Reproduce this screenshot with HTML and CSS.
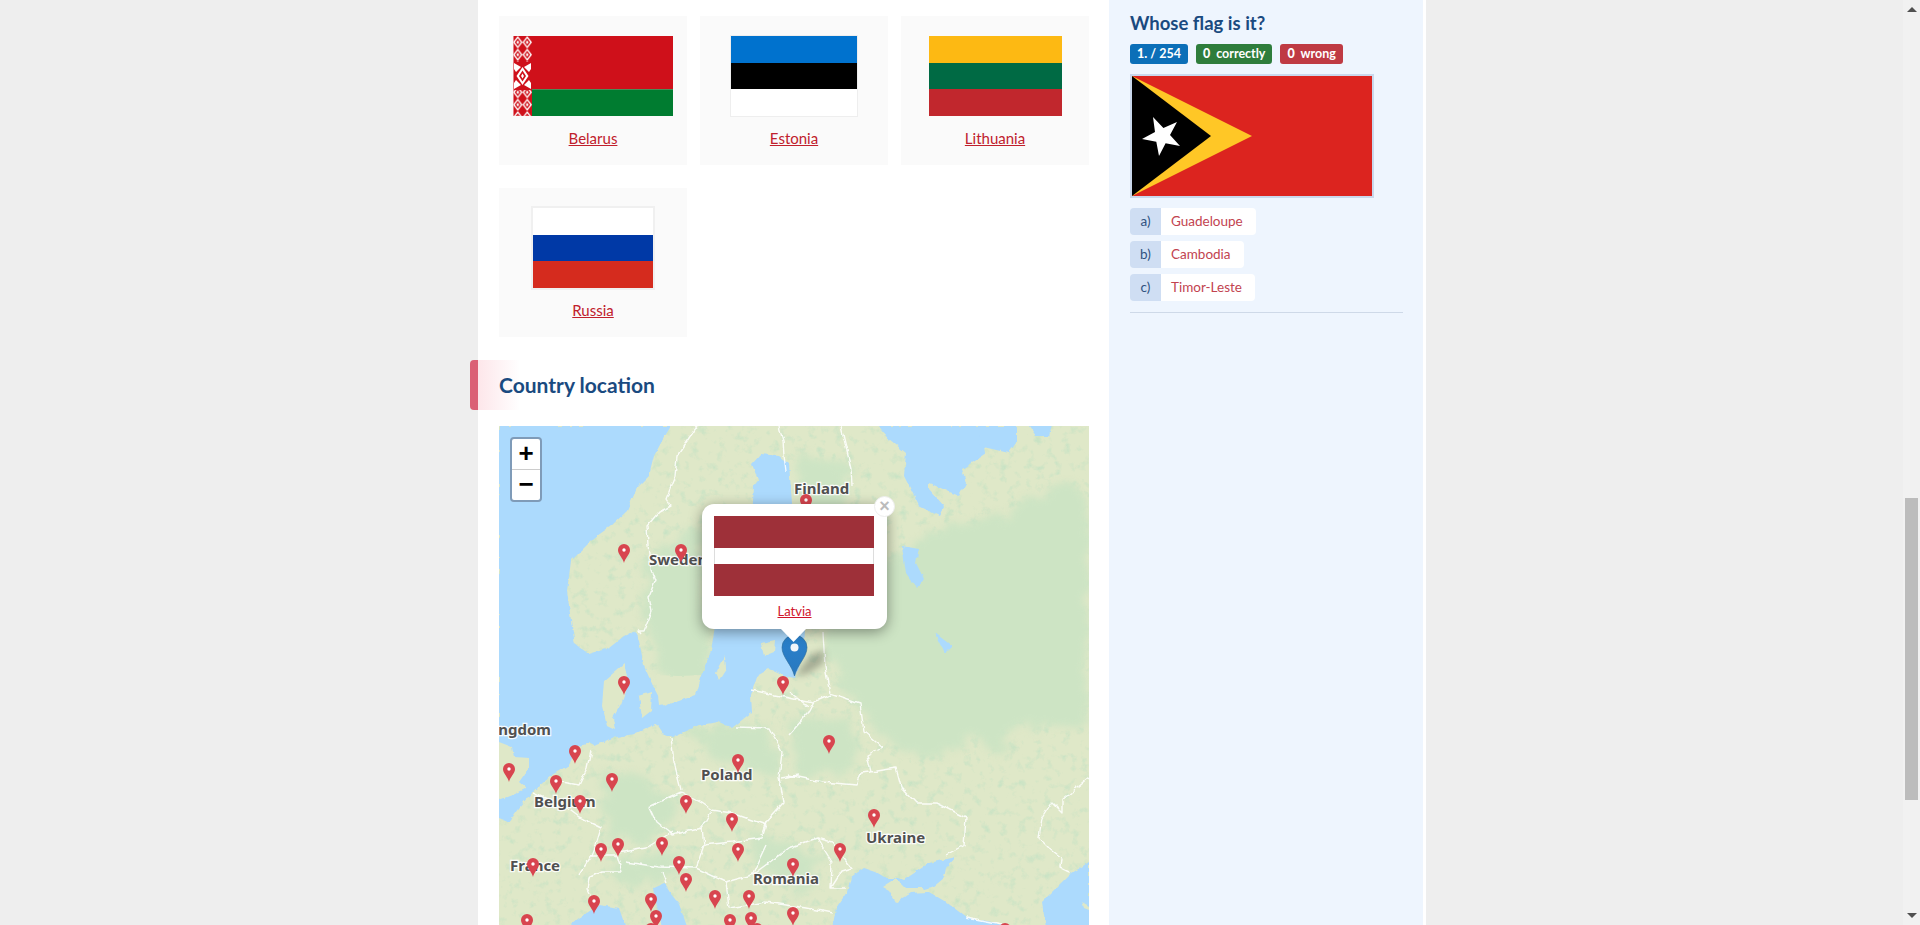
FILE: index.html
```html
<!DOCTYPE html>
<html lang="en">
<head>
<meta charset="utf-8">
<title>Country location</title>
<link rel="stylesheet" href="styles.css">
</head>
<body>
<div class="page">
  <div class="shell">
    <main class="content">
      <div class="cards">
        <article class="card">
          <svg class="flag flag-by" viewBox="0 0 160 80" width="160" height="80" role="img" aria-label="Flag of Belarus">
            <defs>
              <pattern id="byp" width="9.500" height="12.500" patternUnits="userSpaceOnUse">
                <rect width="9.500" height="12.500" fill="#cf101a"/>
                <path d="M4.750 0 9.500 6.250 4.750 12.500 0 6.250Z" fill="#fff"/>
                <path d="M4.750 2.200 7.800 6.250 4.750 10.300 1.700 6.250Z" fill="#cf101a"/>
                <path d="M4.750 4.400 6.100 6.250 4.750 8.100 3.400 6.250Z" fill="#fff"/>
              </pattern>
            </defs>
            <rect width="160" height="53.300" fill="#cf101a"/>
            <rect y="53.300" width="160" height="26.700" fill="#007c30"/>
            <rect width="19" height="80" fill="url(#byp)"/>
            <rect y="26" width="19" height="28" fill="#cf101a"/>
            <path d="M1 27 8 31 3 36 1 33ZM18 27 11 31 16 36 18 33ZM1 53 8 49 3 44 1 47ZM18 53 11 49 16 44 18 47Z" fill="#fff"/>
            <path d="M9.500 31 15.500 40 9.500 49 3.500 40Z" fill="#fff"/>
            <path d="M9.500 34.500 13 40 9.500 45.500 6 40Z" fill="#cf101a"/>
            <path d="M9.500 37.500 11 40 9.500 42.500 8 40Z" fill="#fff"/>
            <rect width="0.600" height="80" fill="#f3c9cb"/>
          </svg>
          <a class="card-link" href="#">Belarus</a>
        </article>
        <article class="card">
          <div class="flag flag-ee"><span class="stripe ee-a"></span><span class="stripe ee-b"></span><span class="stripe ee-c"></span></div>
          <a class="card-link" href="#">Estonia</a>
        </article>
        <article class="card">
          <div class="flag flag-lt"><span class="stripe lt-a"></span><span class="stripe lt-b"></span><span class="stripe lt-c"></span></div>
          <a class="card-link" href="#">Lithuania</a>
        </article>
        <article class="card">
          <div class="flag flag-ru"><span class="stripe ru-a"></span><span class="stripe ru-b"></span><span class="stripe ru-c"></span></div>
          <a class="card-link" href="#">Russia</a>
        </article>
      </div>

      <h2 class="section-title">Country location</h2>

      <div class="map">
        <svg class="map-art" viewBox="0 0 590 520" width="590" height="520" aria-hidden="true">
          <defs>
            <filter id="rough" x="-10%" y="-10%" width="120%" height="120%" color-interpolation-filters="sRGB">
              <feTurbulence type="fractalNoise" baseFrequency="0.06" numOctaves="3" seed="4"/>
              <feDisplacementMap in="SourceGraphic" scale="26" xChannelSelector="R" yChannelSelector="G"/>
              <feGaussianBlur stdDeviation="3.500"/>
            </filter>
            <filter id="coast" x="-2%" y="-2%" width="104%" height="104%" color-interpolation-filters="sRGB">
              <feTurbulence type="fractalNoise" baseFrequency="0.14" numOctaves="2" seed="9"/>
              <feDisplacementMap in="SourceGraphic" scale="4" xChannelSelector="R" yChannelSelector="G"/>
              <feGaussianBlur stdDeviation="0.450"/>
            </filter>
            <filter id="wiggle" x="-2%" y="-2%" width="104%" height="104%" color-interpolation-filters="sRGB">
              <feTurbulence type="fractalNoise" baseFrequency="0.11" numOctaves="2" seed="21"/>
              <feDisplacementMap in="SourceGraphic" scale="5" xChannelSelector="R" yChannelSelector="G"/>
              <feGaussianBlur stdDeviation="0.350"/>
            </filter>
            <filter id="speck" x="0" y="0" width="100%" height="100%" color-interpolation-filters="sRGB">
              <feTurbulence type="fractalNoise" baseFrequency="0.11" numOctaves="4" seed="12"/>
              <feColorMatrix values="0 0 0 0 0.79  0 0 0 0 0.89  0 0 0 0 0.77  3.200 0 0 0 -1.750"/>
              <feGaussianBlur stdDeviation="0.600"/>
            </filter>
            <filter id="soft" x="-50%" y="-50%" width="200%" height="200%"><feGaussianBlur stdDeviation="3.500"/></filter>
            <linearGradient id="blue" x1="0" y1="0" x2="0" y2="1">
              <stop offset="0" stop-color="#2a81cb"/>
              <stop offset="1" stop-color="#2878c0"/>
            </linearGradient>
            <symbol id="pin" viewBox="0 0 12 19" width="12" height="19" overflow="visible">
              <path d="M6 19C5 14 0 10.500 0 6A6 6 0 0 1 12 6C12 10.500 7 14 6 19Z" fill="#d8454f"/>
              <circle cx="6" cy="6" r="1.700" fill="#fff"/>
            </symbol>
          </defs>

          <rect class="land" width="590" height="520"/>
          <rect width="590" height="520" filter="url(#speck)"/>

          <g class="forest" filter="url(#rough)">
            <path d="M395 130 440 100 500 90 560 60 590 70V300H520L500 330 480 310 430 330 390 320 370 290 340 260 325 210 340 170Z"/>
            <path d="M150 130 200 100 215 250 175 270 160 230 145 190Z"/>
            <path d="M300 30 350 40 345 110 300 105Z"/>
            <path d="M100 350 140 345 175 380 150 420 110 410Z"/>
            <path d="M290 295 350 285 360 345 300 350Z"/>
            <path d="M100 440 170 425 195 445 125 458Z"/>
            <path d="M190 300 270 300 285 350 220 340Z"/>
            <path d="M250 400 290 420 330 430 300 470 260 440Z"/>
          </g>

          <g class="water" filter="url(#coast)">
            <path d="M0 0H172L163 15 155 30 150 50 138 62 128 85 112 100 95 112 72 135 68 165 72 195 76 218 90 228 110 222 125 210 135 205 140 215 145 240 155 262 165 281 185 270 203 250 212 225 216 200 235 150 253 90 255 60 270 40 290 38 293 77 282 120 285 170 306 203 305 225 300 242 296 252 285 250 270 243 258 250 252 269 253 286 233 302 220 296 200 299 173 311 163 307 157 298 135 308 113 312 95 320 90 317 78 321 70 339 53 349 33 366 20 382 10 396 0 392Z"/>
            <path d="M47 520 80 492 100 479 120 482 133 520Z"/>
            <path d="M154 462 165 457 172 468 180 478 195 520H165L158 480Z"/>
            <path d="M330 520 337 482 348 466 352 451 365 442 377 446 387 452 400 452 405 454 430 437 457 431 447 442 445 452 433 462 417 466 430 466 447 476 467 491 503 498 510 520Z"/>
            <path d="M590 436 570 449 543 476 550 520H590Z"/>
            <path d="M380 0 390 13 407 27 405 50 420 80 440 90 445 80 430 63 430 57 460 70 467 57 463 43 487 27 483 0Z"/>
            <path d="M481 0H517V17L510 27 493 23 480 20Z"/>
            <path d="M530 0H553L550 10 537 10Z"/>
            <path d="M403 120 420 123 417 137 425 153 418 163 407 147Z"/>
            <path d="M436 207 453 220 446 227Z"/>
            <path d="M253 38 262 28 280 30 290 38 280 60 262 62Z"/>
          </g>
          <g class="land-patch" filter="url(#coast)">
            <path d="M0 316 13 321 15 331 30 332 30 342 20 356 27 362 13 369 0 374Z"/>
            <path d="M125 238 128 250 128 262 122 278 114 292 116 304 108 300 103 280 105 255Z"/>
            <path d="M140 270 153 266 152 285 143 292Z"/>
            <path d="M157 249 180 250 203 249 197 269 177 276 160 279Z"/>
            <path d="M217 248 226 230 227 243 220 254Z"/>
            <path d="M262 218 276 215 275 226 265 230Z"/>
            <path d="M383 461 397 452 407 462 423 462 427 466 412 467 397 477 390 465Z"/>
            <path d="M583 476 590 480V484L585 482Z"/>
          </g>

          <g class="borders" filter="url(#wiggle)">
            <path d="M198 0 188 15 178 30 176 50 167 72 172 80 160 86 148 100 149 120 152 145 156 155 150 170 153 185 145 205 140 205 142 208"/>
            <path d="M280 0 284 15 285 30 287 45"/>
            <path d="M342 0 345 13 352 42 353 60"/>
            <path d="M324 207 326 241 331 267"/>
            <path d="M252 264 314 277"/>
            <path d="M331 267 361 277 365 306 383 321 368 329 372 346 397 342 402 361 417 377 437 377 467 392 465 419 447 429"/>
            <path d="M290 349 323 356 358 359 362 347 372 346"/>
            <path d="M290 309 310 286 315 276 332 269M290 266 310 281"/>
            <path d="M237 301 270 302 283 326 280 352 285 376 267 396 262 409M282 352 300 349"/>
            <path d="M172 311 175 336 182 364"/>
            <path d="M182 366 150 381 157 396 173 409 203 402 213 384 203 377 182 366"/>
            <path d="M213 384 233 387 267 399 263 412 233 416 205 419 203 402"/>
            <path d="M205 419 197 442 227 456 253 449 267 419"/>
            <path d="M119 427 147 422 173 406M127 436 160 441 197 442"/>
            <path d="M80 449 93 429 118 429 123 446 103 446 90 452 88 462 93 472"/>
            <path d="M68 382 80 391 102 402 97 419 93 429"/>
            <path d="M63 356 80 359 88 342 92 324M33 366 68 382"/>
            <path d="M163 446 167 456M227 456 230 482 267 476 287 479 307 482 333 487"/>
            <path d="M253 449 290 422 318 412 333 436 332 462 347 462M318 412 333 416 353 442 343 445 332 462"/>
            <path d="M590 352 563 374 563 386 553 376 543 392 540 412 550 422 563 432 562 442 570 446"/>
            <path d="M467 491 503 498"/>
          </g>

          <g class="labels">
            <text x="295" y="68">Finland</text>
            <text x="150" y="139">Sweden</text>
            <text x="52" y="309" text-anchor="end">United Kingdom</text>
            <text x="202" y="354">Poland</text>
            <text x="35" y="381">Belgium</text>
            <text x="11" y="445">France</text>
            <text x="254" y="458">Romania</text>
            <text x="367" y="417">Ukraine</text>
          </g>

          <g class="pins">
            <use href="#pin" x="119" y="118"/><use href="#pin" x="176" y="118"/><use href="#pin" x="301" y="68"/>
            <use href="#pin" x="119" y="250"/><use href="#pin" x="278" y="250"/><use href="#pin" x="70" y="319"/>
            <use href="#pin" x="4" y="337"/><use href="#pin" x="233" y="328"/><use href="#pin" x="51" y="349"/>
            <use href="#pin" x="107" y="347"/><use href="#pin" x="75" y="369"/><use href="#pin" x="181" y="369"/>
            <use href="#pin" x="227" y="387"/><use href="#pin" x="96" y="417"/><use href="#pin" x="113" y="412"/>
            <use href="#pin" x="157" y="411"/><use href="#pin" x="233" y="417"/><use href="#pin" x="28" y="432"/>
            <use href="#pin" x="174" y="430"/><use href="#pin" x="181" y="447"/><use href="#pin" x="288" y="432"/>
            <use href="#pin" x="89" y="469"/><use href="#pin" x="146" y="467"/><use href="#pin" x="210" y="464"/>
            <use href="#pin" x="244" y="464"/><use href="#pin" x="146" y="497"/><use href="#pin" x="151" y="484"/>
            <use href="#pin" x="22" y="488"/><use href="#pin" x="225" y="488"/><use href="#pin" x="246" y="486"/>
            <use href="#pin" x="288" y="481"/><use href="#pin" x="252" y="497"/><use href="#pin" x="324" y="309"/>
            <use href="#pin" x="369" y="383"/><use href="#pin" x="335" y="417"/><use href="#pin" x="500" y="497"/>
          </g>

          <path class="pin-shadow" d="M296 250 312 228 326 224 324 238 308 248Z" filter="url(#soft)"/>
          <path class="pin-blue" d="M295.500 250C293 239 283 231 283 221.500A12.500 12.500 0 0 1 308 221.500C308 231 298 239 295.500 250Z"/>
          <circle class="pin-blue-dot" cx="295.500" cy="221.500" r="4"/>
        </svg>

        <div class="zoom">
          <a class="zoom-btn zoom-in" href="#">+</a>
          <a class="zoom-btn" href="#">&#8722;</a>
        </div>

        <div class="popup">
          <a class="popup-close" href="#">&#215;</a>
          <div class="popup-flag"><span class="lv-a"></span><span class="lv-b"></span><span class="lv-a"></span></div>
          <a class="popup-link" href="#">Latvia</a>
          <span class="popup-tip"></span>
        </div>
      </div>
    </main>

    <aside class="quiz">
      <h3 class="quiz-title">Whose flag is it?</h3>
      <div class="badges">
        <span class="badge badge-blue"><b>1.</b> / 254</span>
        <span class="badge badge-green"><b>0</b> correctly</span>
        <span class="badge badge-red"><b>0</b> wrong</span>
      </div>
      <svg class="quiz-flag" viewBox="0 0 240 120" width="240" height="120" role="img" aria-label="Flag of Timor-Leste">
        <rect width="240" height="120" fill="#dc241f"/>
        <path d="M0 0 120 60 0 120Z" fill="#ffc726"/>
        <path d="M0 0 79 60 0 120Z" fill="#000"/>
        <path d="M21 41 31.400 52.100 45 46 38 59 48 70 33.600 67.200 27 80 24.300 65.700 10 63 23 56.100Z" fill="#fff"/>
      </svg>
      <ul class="answers">
        <li class="answer"><span class="answer-key">a)</span><a class="answer-text" href="#">Guadeloupe</a></li>
        <li class="answer"><span class="answer-key">b)</span><a class="answer-text" href="#">Cambodia</a></li>
        <li class="answer"><span class="answer-key">c)</span><a class="answer-text" href="#">Timor-Leste</a></li>
      </ul>
      <hr class="rule">
    </aside>
  </div>

  <div class="scrollbar" aria-hidden="true">
    <span class="arrow arrow-up"></span>
    <span class="thumb"></span>
    <span class="arrow arrow-down"></span>
  </div>
</div>
</body>
</html>
```

FILE: styles.css
```css
* { box-sizing: border-box; }

html, body {
  margin: 0;
  height: 925px;
  overflow: hidden;
}

body {
  background: #eeeeee;
  font-family: "Lato", "Noto Sans", sans-serif;
  color: #333;
}

.page {
  display: flex;
  height: 925px;
}

.shell {
  display: flex;
  width: 948px;
  margin-left: 478px;
  margin-right: 477px;
  background: #fff;
  flex: none;
}

.content {
  width: 590px;
  margin-left: 21px;
  padding-top: 16px;
  flex: none;
}

.cards {
  display: grid;
  grid-template-columns: repeat(3, 188px);
  column-gap: 13px;
  row-gap: 23px;
}

.card {
  height: 149px;
  background: #fafafa;
  padding-top: 20px;
  display: flex;
  flex-direction: column;
  align-items: center;
}

.flag {
  display: flex;
  flex-direction: column;
  height: 80px;
  flex: none;
}

.flag-ee { width: 126px; box-shadow: 0 0 0 1px #eee; }
.flag-lt { width: 133px; }
.flag-ru { width: 120px; box-shadow: 0 0 0 2px #f0f0f0; }

.stripe { flex: 1; }
.ee-a { background: #0072ce; }
.ee-b { background: #000; }
.ee-c { background: #fff; }
.lt-a { background: #fdb913; }
.lt-b { background: #006a44; }
.lt-c { background: #c1272d; }
.ru-a { background: #fff; }
.ru-b { background: #0039a6; }
.ru-c { background: #d52b1e; }

.card-link {
  margin-top: 13px;
  font-size: 15px;
  line-height: 18px;
  color: #c0202c;
  text-decoration: underline;
}

.section-title {
  margin: 23px 0 16px -29px;
  height: 50px;
  padding-left: 21px;
  border-left: 8px solid #db6075;
  border-radius: 4px 0 0 4px;
  background: linear-gradient(to right, #fde6ea, #fff 42px);
  color: #1a4a80;
  font-size: 21px;
  font-weight: 700;
  line-height: 50px;
}

.map {
  position: relative;
  width: 590px;
  height: 520px;
  overflow: hidden;
}

.map-art { display: block; }

.land { fill: #dfe8c8; }
.forest { fill: #cde4c4; }
.water { fill: #acdafd; }
.land-patch { fill: #dfe8c8; }

.borders {
  fill: none;
  stroke: #fff;
  stroke-width: 1.4;
  stroke-opacity: .85;
  stroke-linejoin: round;
}

.labels {
  font-family: "Noto Sans", sans-serif;
  font-size: 15px;
  font-weight: 700;
  fill: #505050;
  stroke: #fff;
  stroke-width: 2.500px;
  stroke-opacity: .9;
  paint-order: stroke;
}

.pin-shadow { fill: rgba(0, 0, 0, .26); }
.pin-blue { fill: url(#blue); stroke: #2e6c97; stroke-width: .6; }
.pin-blue-dot { fill: #f2f6fa; }

.zoom {
  position: absolute;
  left: 11px;
  top: 11px;
  width: 32px;
  border: 2px solid #7f9bb8;
  border-radius: 4px;
  background: #fff;
}

.zoom-btn {
  display: block;
  height: 30px;
  line-height: 28px;
  text-align: center;
  font-family: "Liberation Sans", sans-serif;
  font-size: 26px;
  font-weight: 700;
  color: #000;
  text-decoration: none;
}

.zoom-in { height: 31px; border-bottom: 1px solid #ccc; }

.popup {
  position: absolute;
  left: 203px;
  top: 78px;
  width: 185px;
  height: 125px;
  padding: 12px;
  background: #fff;
  border-radius: 12px;
  box-shadow: 0 3px 14px rgba(0, 0, 0, .4);
  text-align: center;
}

.popup-close {
  position: absolute;
  right: -8px;
  top: -8px;
  width: 21px;
  height: 21px;
  border-radius: 50%;
  background: #fff;
  border: 1px solid #eee;
  color: #bbb;
  font: 700 18px/18px "Liberation Sans", sans-serif;
  text-decoration: none;
}

.popup-flag {
  display: flex;
  flex-direction: column;
  width: 160px;
  height: 80px;
}

.lv-a { height: 32px; background: #9e3039; }
.lv-b { height: 16px; background: #fff; border: solid #ddd; border-width: 0 1px; }

.popup-link {
  display: block;
  margin-top: 7px;
  font-size: 13px;
  line-height: 16px;
  color: #d0132a;
  text-decoration: underline;
}

.popup-tip {
  position: absolute;
  left: 79px;
  top: 125px;
  width: 25px;
  height: 13px;
  background: #fff;
  clip-path: polygon(0 0, 100% 0, 50% 100%);
}

.quiz {
  width: 314px;
  margin-left: 20px;
  padding: 10px 20px 0 21px;
  background: #eef5fe;
  flex: none;
}

.quiz-title {
  margin: 0 0 8px;
  font-size: 18.500px;
  line-height: 26px;
  font-weight: 700;
  color: #1a4a80;
}

.badges {
  display: flex;
  gap: 8px;
}

.badge {
  height: 20px;
  padding: 0 7px;
  border-radius: 3px;
  color: #fff;
  font-size: 12.500px;
  line-height: 20px;
  font-weight: 700;
  word-spacing: 3px;
  white-space: pre;
}

.badge-blue { background: #0b6fb8; word-spacing: 0; }
.badge-green { background: #2e7d3c; }
.badge-red { background: #bf3a43; }

.quiz-flag {
  display: block;
  box-sizing: content-box;
  margin-top: 10px;
  border: 2px solid #cad8ec;
}

.answers {
  list-style: none;
  margin: 10px 0 0;
  padding: 0;
}

.answer {
  display: flex;
  height: 27px;
  margin-bottom: 6px;
  font-size: 13.500px;
  line-height: 27px;
}

.answer-key {
  width: 31px;
  text-align: center;
  background: #cfdef3;
  color: #2f5280;
  border-radius: 4px 0 0 4px;
}

.answer-text {
  padding: 0 13px 0 10px;
  background: #fff;
  border-radius: 0 4px 4px 0;
  color: #c2434f;
  text-decoration: none;
}

.rule {
  margin: 11px 0 0;
  border: 0;
  border-top: 1px solid #ced9e8;
}

.scrollbar {
  width: 17px;
  height: 925px;
  background: #f1f1f1;
  display: flex;
  flex-direction: column;
  align-items: center;
  flex: none;
}

.arrow {
  width: 0;
  height: 0;
  border-left: 5px solid transparent;
  border-right: 5px solid transparent;
  flex: none;
}

.arrow-up { margin-top: 7px; border-bottom: 5px solid #505050; }
.arrow-down { margin-top: auto; margin-bottom: 7px; border-top: 5px solid #505050; }

.thumb {
  width: 13px;
  height: 302px;
  margin-top: 486px;
  background: #bcbcbc;
  flex: none;
}
```
